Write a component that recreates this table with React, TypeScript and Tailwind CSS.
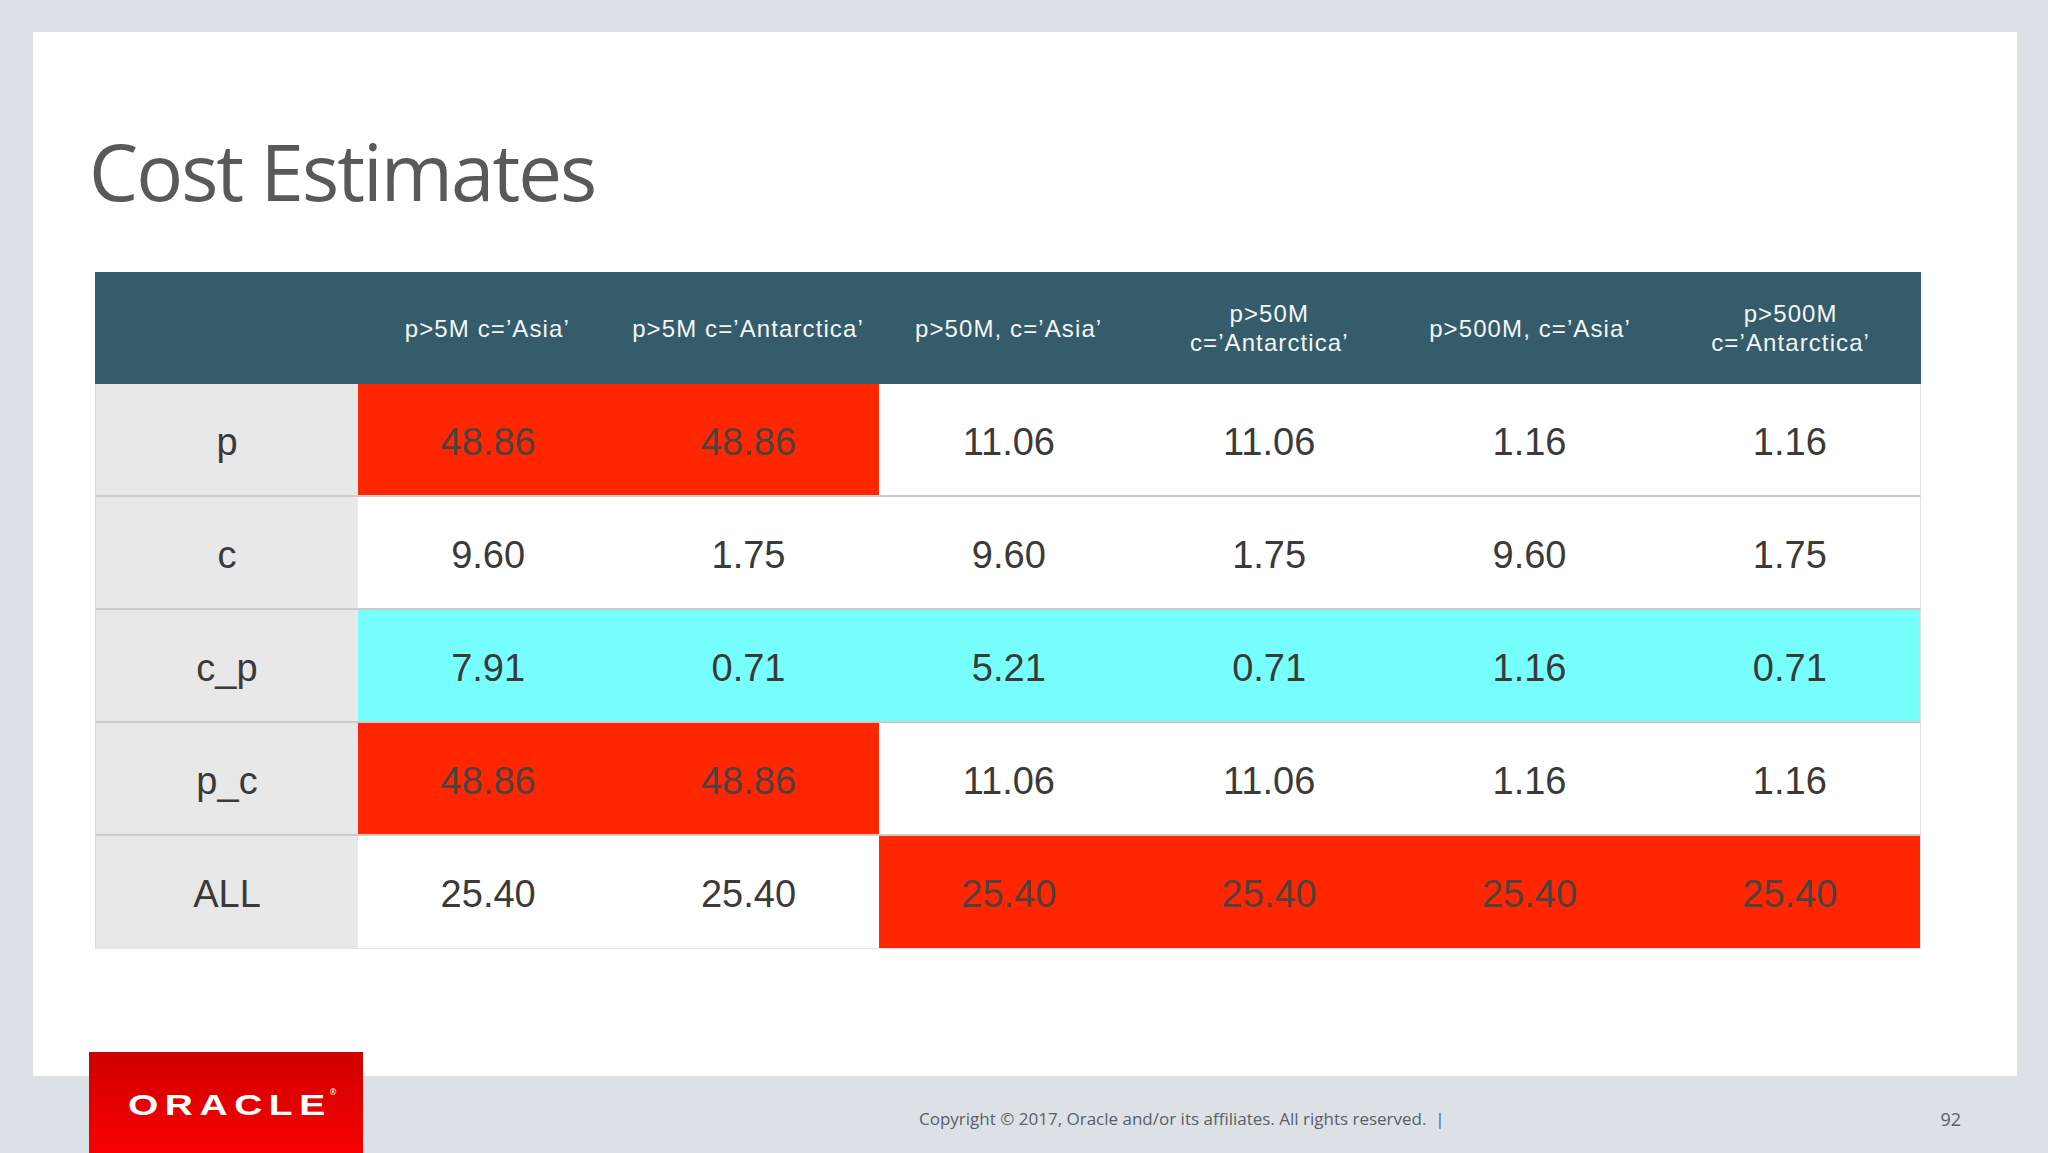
type Cell = { v: string; tone?: "red" | "cyan" };

const headers: string[][] = [
  ["p>5M c=’Asia’"],
  ["p>5M c=’Antarctica’"],
  ["p>50M, c=’Asia’"],
  ["p>50M", "c=’Antarctica’"],
  ["p>500M, c=’Asia’"],
  ["p>500M", "c=’Antarctica’"],
];

const R = "red" as const;
const C = "cyan" as const;

const rows: { label: string; cells: Cell[] }[] = [
  {
    label: "p",
    cells: [{ v: "48.86", tone: R }, { v: "48.86", tone: R }, { v: "11.06" }, { v: "11.06" }, { v: "1.16" }, { v: "1.16" }],
  },
  {
    label: "c",
    cells: [{ v: "9.60" }, { v: "1.75" }, { v: "9.60" }, { v: "1.75" }, { v: "9.60" }, { v: "1.75" }],
  },
  {
    label: "c_p",
    cells: [
      { v: "7.91", tone: C },
      { v: "0.71", tone: C },
      { v: "5.21", tone: C },
      { v: "0.71", tone: C },
      { v: "1.16", tone: C },
      { v: "0.71", tone: C },
    ],
  },
  {
    label: "p_c",
    cells: [{ v: "48.86", tone: R }, { v: "48.86", tone: R }, { v: "11.06" }, { v: "11.06" }, { v: "1.16" }, { v: "1.16" }],
  },
  {
    label: "ALL",
    cells: [{ v: "25.40" }, { v: "25.40" }, { v: "25.40", tone: R }, { v: "25.40", tone: R }, { v: "25.40", tone: R }, { v: "25.40", tone: R }],
  },
];

const toneClass = (t?: "red" | "cyan") => {
  if (t === "red") return "bg-[#ff2600] text-[#4e4140]";
  if (t === "cyan") return "bg-[#76fffd] text-[#3a3a3a]";
  return "bg-white text-[#3a3a3a]";
};

const CostTable = () => {
  return (
    <div className="w-[1826px] font-['Liberation_Sans',Arial,sans-serif]">
      <div className="grid h-[112px] grid-cols-[262px_repeat(6,1fr)] bg-[#345c6b] text-[24px] leading-[29px] tracking-[1.1px] text-[#f4f6f7]">
        <div />
        {headers.map((h, i) => (
          <div key={i} className="flex flex-col items-center justify-center text-center">
            {h.map((line, j) => (
              <span key={j}>{line}</span>
            ))}
          </div>
        ))}
      </div>
      {rows.map((row, i) => (
        <div
          key={row.label}
          className={
            "grid h-[113px] grid-cols-[262px_repeat(6,1fr)] border-l border-r border-l-[#dcdcdc] border-r-[#e4e4e4] text-[38px] " +
            (i === rows.length - 1 ? "border-b border-b-[#e2e2e2]" : "border-b-2 border-b-[#cbcbcb]")
          }
        >
          <div className="flex items-center justify-center bg-[#e8e8e8] pt-[5px] text-[#3a3a3a]">{row.label}</div>
          {row.cells.map((c, j) => (
            <div key={j} className={"flex items-center justify-center pt-[5px] " + toneClass(c.tone)}>
              {c.v}
            </div>
          ))}
        </div>
      ))}
    </div>
  );
};

export default function App() {
  return (
    <div className="flex h-[1153px] w-[2048px] flex-col overflow-hidden bg-[#dce1e8]">
      <div className="ml-[33px] mt-[32px] h-[1044px] w-[1984px] shrink-0 bg-white pl-[62px]">
        <h1 className="ml-[-6px] mt-[100px] font-['Open_Sans',sans-serif] text-[78px] font-normal leading-none tracking-[-0.025em] text-[#595959]">
          Cost Estimates
        </h1>
        <div className="mt-[62px]">
          <CostTable />
        </div>
      </div>
      <div className="flex h-[77px] items-start">
        <div className="ml-[89px] mt-[-24px] flex h-[101px] w-[274px] shrink-0 items-start bg-gradient-to-b from-[#cf0000] to-[#f90000] pl-[39px] pt-[38px]">
          <span className="inline-block origin-left scale-x-[1.3] font-['Liberation_Sans',Arial,sans-serif] text-[30px] font-bold leading-none tracking-[5px] text-white">
            ORACLE
          </span>
          <span className="ml-[45px] mt-[-2px] text-[8px] leading-none text-white">®</span>
        </div>
        <div className="ml-[556px] mt-[34px] font-['Open_Sans',sans-serif] text-[17px] leading-none text-[#5a5f66]">
          Copyright © 2017, Oracle and/or its affiliates. All rights reserved.&nbsp;&nbsp;|
        </div>
        <div className="ml-auto mr-[87px] mt-[34px] font-['Open_Sans',sans-serif] text-[18px] leading-none text-[#5a5f66]">
          92
        </div>
      </div>
    </div>
  );
}
